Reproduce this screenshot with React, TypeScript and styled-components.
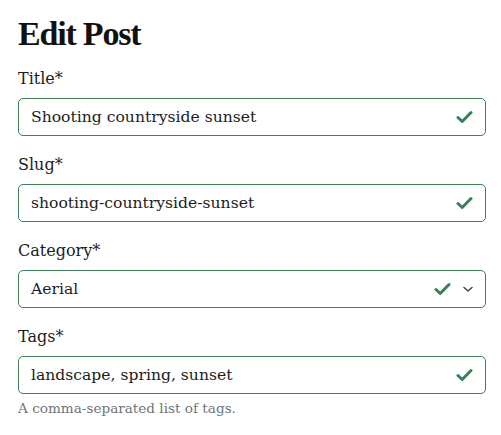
import React from "react";
import styled, { createGlobalStyle } from "styled-components";

const Global = createGlobalStyle`
  html, body { margin: 0; padding: 0; background: #fff; }
  body { font-family: "DejaVu Serif", serif; color: #1c1c1c; }
`;

const Page = styled.div`
  padding: 14px 15px 0 18px;
`;

const Heading = styled.h1`
  margin: 0 0 14px;
  font-family: "Liberation Serif", serif;
  font-weight: 700;
  font-size: 34px;
  line-height: 40px;
  letter-spacing: -1.2px;
  color: #111;
`;

const Field = styled.div`
  display: flex;
  flex-direction: column;
  margin-bottom: 18px;
`;

const Label = styled.label`
  font-size: 16px;
  line-height: 22px;
  margin-bottom: 8px;
`;

const InputBox = styled.div`
  display: flex;
  align-items: center;
  height: 38px;
  box-sizing: border-box;
  border: 1px solid #3b8057;
  border-radius: 5px;
  padding: 0 12px 0 12px;
`;

const Value = styled.span`
  flex: 1;
  font-size: 15.6px;
`;

const Icons = styled.span`
  display: flex;
  align-items: center;
  gap: 12px;
`;

const Help = styled.div`
  margin-top: 5px;
  font-size: 13.6px;
  line-height: 18px;
  color: #6e7378;
`;

const Check = () => (
  <svg width="17" height="14" viewBox="0 0 17 14">
    <path d="M2 7.5 L6.2 11.5 L15 2.5" fill="none" stroke="#3b8057" strokeWidth="3" strokeLinecap="round" strokeLinejoin="round" />
  </svg>
);

const Chevron = () => (
  <svg width="10" height="7" viewBox="0 0 10 7">
    <path d="M1 1.5 L5 5 L9 1.5" fill="none" stroke="#444" strokeWidth="1.5" strokeLinecap="round" strokeLinejoin="round" />
  </svg>
);

const fields = [
  { label: "Title*", value: "Shooting countryside sunset" },
  { label: "Slug*", value: "shooting-countryside-sunset" },
  { label: "Category*", value: "Aerial", select: true },
  { label: "Tags*", value: "landscape, spring, sunset", help: "A comma-separated list of tags." },
];

export default function App() {
  return (
    <>
      <Global />
      <Page>
        <Heading>Edit Post</Heading>
        {fields.map((f) => (
          <Field key={f.label}>
            <Label>{f.label}</Label>
            <InputBox>
              <Value>{f.value}</Value>
              <Icons>
                <Check />
                {f.select && <Chevron />}
              </Icons>
            </InputBox>
            {f.help && <Help>{f.help}</Help>}
          </Field>
        ))}
      </Page>
    </>
  );
}
